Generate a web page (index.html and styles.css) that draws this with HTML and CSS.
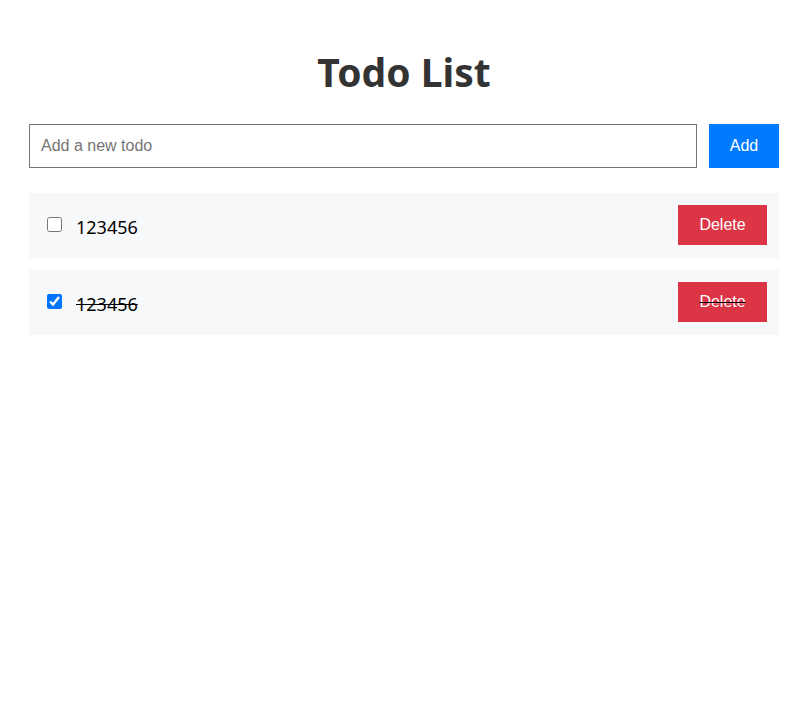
FILE: index.html
```html
<!DOCTYPE html>
<html lang="en">
<head>
<meta charset="utf-8">
<title>Todo List</title>
<link rel="stylesheet" href="styles.css">
</head>
<body>
<div class="app">
  <h1 class="title">Todo List</h1>
  <form class="add-form" onsubmit="return false;">
    <input class="add-input" type="text" placeholder="Add a new todo">
    <button class="add-btn" type="submit">Add</button>
  </form>
  <ul class="todo-list">
    <li class="todo-item">
      <input class="todo-check" type="checkbox">
      <span class="todo-text">123456</span>
      <button class="delete-btn">Delete</button>
    </li>
    <li class="todo-item done">
      <input class="todo-check" type="checkbox" checked>
      <span class="todo-text">123456</span>
      <button class="delete-btn">Delete</button>
    </li>
  </ul>
</div>
</body>
</html>
```
FILE: styles.css
```css
* { box-sizing: border-box; }
body {
  margin: 0;
  background: #fff;
  font-family: "Noto Sans", "Open Sans", sans-serif;
}
.app {
  width: 750px;
  margin: 0 auto;
  padding-top: 44px;
}
.title {
  margin: 0 0 24px;
  text-align: center;
  font-size: 39px;
  line-height: 56px;
  font-weight: 700;
  color: #333;
}
.add-form {
  display: flex;
  gap: 12px;
}
.add-input {
  flex: 1;
  height: 44px;
  padding: 0 11px;
  border: 1px solid #767676;
  border-radius: 0;
  font-family: "Liberation Sans", Arial, sans-serif;
  font-size: 16px;
  color: #333;
  outline: none;
}
.add-input::placeholder { color: #757575; }
.add-btn {
  width: 70px;
  height: 44px;
  border: none;
  background: #007bff;
  color: #fff;
  font-family: "Liberation Sans", Arial, sans-serif;
  font-size: 16px;
  cursor: pointer;
}
.todo-list {
  list-style: none;
  margin: 25px 0 0;
  padding: 0;
  display: flex;
  flex-direction: column;
  gap: 12px;
}
.todo-item {
  display: flex;
  align-items: center;
  height: 65px;
  padding: 0 12px 1px 15px;
  background: #f7f8fa;
  color: #000;
}
.todo-item.done { text-decoration: line-through; }
.todo-check {
  width: 15px;
  height: 15px;
  margin: 0 14px 2px 3px;
}
.todo-text {
  font-size: 18px;
  margin-top: 4px;
}
.delete-btn {
  margin-left: auto;
  width: 89px;
  height: 40px;
  border: none;
  background: #dc3545;
  color: #fff;
  font-family: "Liberation Sans", Arial, sans-serif;
  font-size: 16px;
  cursor: pointer;
}
```
